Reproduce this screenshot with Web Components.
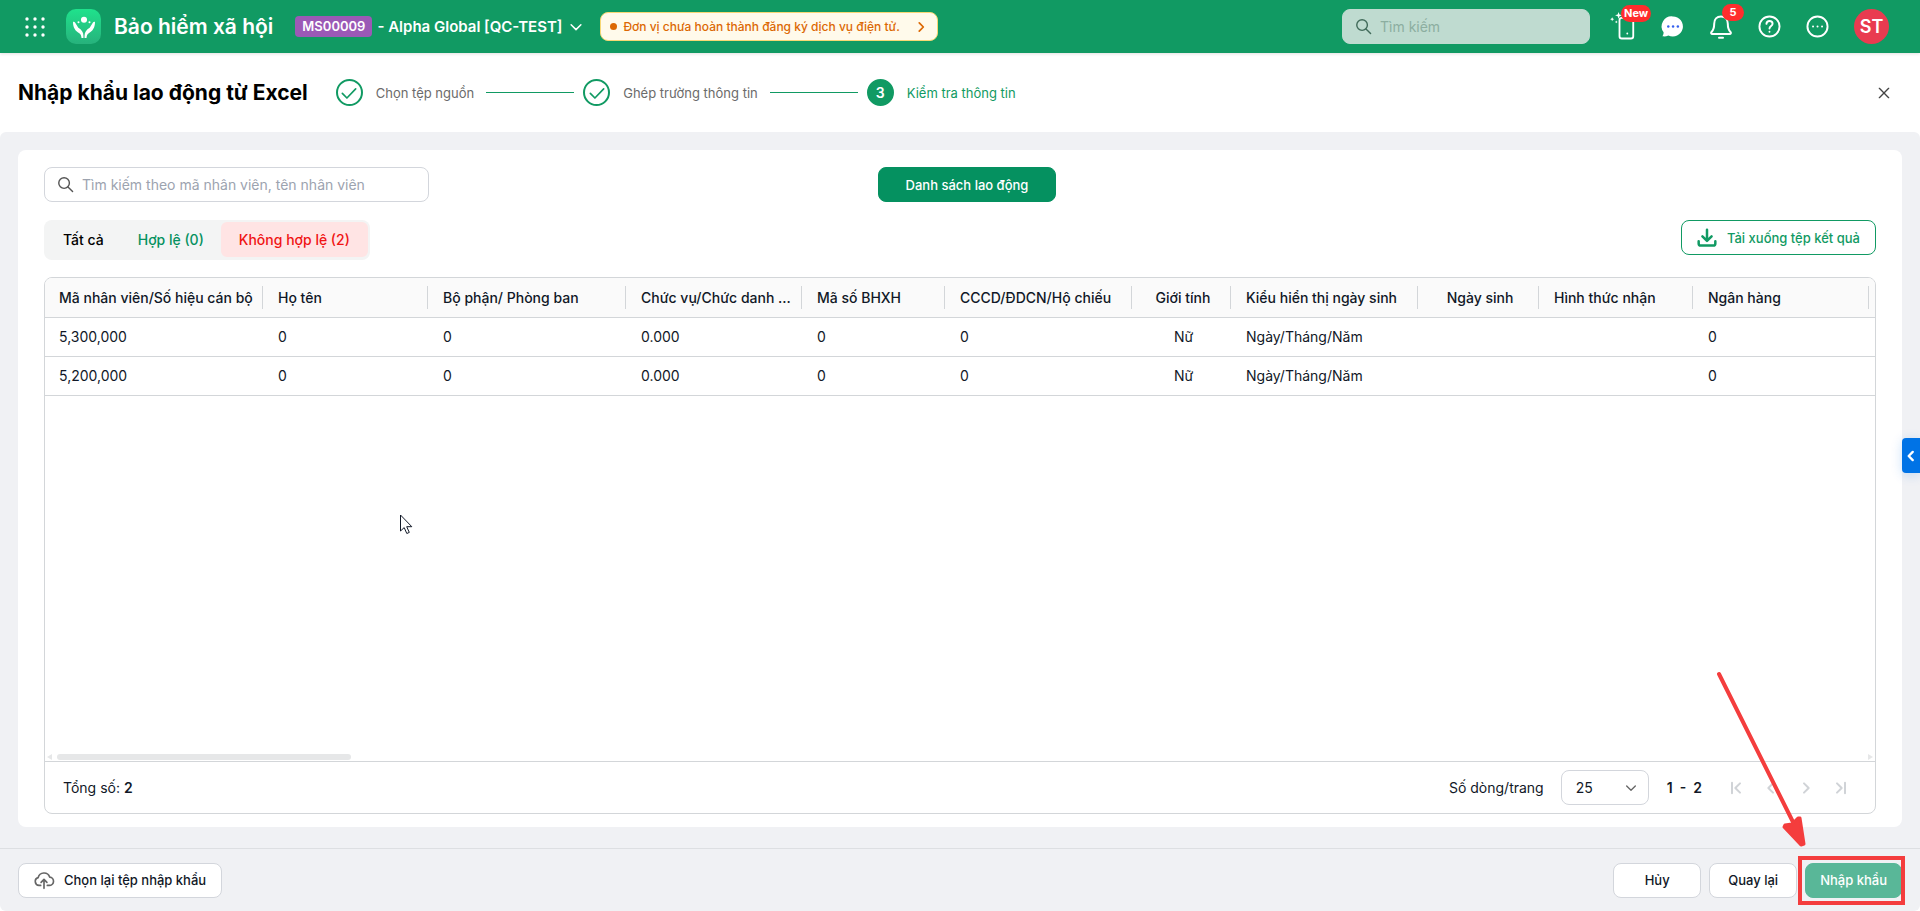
<!DOCTYPE html>
<html lang="vi">
<head>
<meta charset="utf-8">
<title>Nhập khẩu lao động từ Excel</title>
<style>
  body {
    margin: 0;
    background: #fff;
    color: #111827;
    font: 14px/20px Inter, "Open Sans", sans-serif;
  }
</style>
</head>
<body>
<import-page></import-page>

<script>
const ICONS = {
  apps: '<g fill="currentColor" stroke="none"><circle cx="4" cy="4" r="1.7"/><circle cx="12" cy="4" r="1.7"/><circle cx="20" cy="4" r="1.7"/><circle cx="4" cy="12" r="1.7"/><circle cx="12" cy="12" r="1.7"/><circle cx="20" cy="12" r="1.7"/><circle cx="4" cy="20" r="1.7"/><circle cx="12" cy="20" r="1.7"/><circle cx="20" cy="20" r="1.7"/></g>',
  search: '<circle cx="10" cy="10" r="7.500"/><path d="M15.500 15.500l6.500 6.500"/>',
  down: '<path d="M5.500 9l6.500 6.500L18.500 9"/>',
  right: '<path d="M9 5l7 7-7 7"/>',
  left: '<path d="M15 5l-7 7 7 7"/>',
  first: '<path d="M6 4v16M18 5l-7 7 7 7"/>',
  last: '<path d="M18 4v16M6 5l7 7-7 7"/>',
  close: '<path d="M5 5l14 14M19 5L5 19"/>',
  check: '<path d="M4 12.5l5.500 5.500L20 7"/>',
  phone: '<rect x="6" y="2" width="15" height="22.500" rx="2.500"/><path d="M14.500 19v.1"/><path fill="currentColor" stroke="none" d="M5 -4.500l1 2.800 2.800 1-2.800 1-1 2.800-1-2.800-2.800-1 2.800-1zM-2 1.300l.7 1.500 1.500.7-1.500.7L-2 5.700l-.7-1.500-1.500-.7 1.500-.7zM2.500 5l.5 1 1 .5-1 .5-.5 1-.5-1-1-.5 1-.5z"/>',
  chat: '<path fill="currentColor" stroke="none" d="M12.500 1.500a10.500 10.500 0 1 1-4.800 19.900c-2 1-4 1.300-6.200.9.900-1.300 1.300-2.600 1.200-4.200A10.500 10.500 0 0 1 12.500 1.500z"/><g fill="#3560ee" stroke="none"><circle cx="7.600" cy="12" r="1.300"/><circle cx="12.600" cy="12" r="1.300"/><circle cx="17.600" cy="12" r="1.300"/></g>',
  bell: '<path d="M12 1.500c-4.200 0-6.800 3-6.800 7.200 0 4.800-1 6.600-2.700 8.300-.8.900-.3 2 .8 2h17.400c1.100 0 1.600-1.100.8-2-1.700-1.700-2.700-3.500-2.700-8.300 0-4.200-2.600-7.200-6.800-7.200z"/><path d="M10 22.700h4"/>',
  help: '<circle cx="12" cy="12" r="10.500"/><path d="M8.800 9.300c.2-2 1.400-3 3.200-3s3.200 1.100 3.200 2.800c0 2.300-3.200 2.400-3.200 5"/><path d="M12 17.500v.1"/>',
  more: '<circle cx="12" cy="12" r="10.500"/><path d="M7.300 12h.1M12 12h.1M16.700 12h.1"/>',
  download: '<path d="M12 2v13M6.500 10l5.500 5.500 5.500-5.500M2 16v2.500c0 1.500 1 2.500 2.500 2.500h15c1.500 0 2.500-1 2.500-2.500V16"/>',
  upload: '<path d="M8 18.500H6a4.800 4.800 0 0 1-1-9.400A7.200 7.200 0 0 1 18.800 8.500 5 5 0 0 1 18 18.500h-2M12 22V11.500M8.500 14.800L12 11.300l3.500 3.500"/>',
  logo: '<g fill="#fff" stroke="none"><circle cx="12" cy="4" r="3.300"/><circle cx="6" cy="6.800" r="1.100"/><circle cx="18" cy="6.800" r="1.100"/><path d="M0 6.500c.9-.5 1.800 0 2.400.9l3.400 5.300c3.600 2 5.600 5 5.600 8.800v2.500H9.300c-.2-2.500-1-4.200-2.500-5.200C2.500 16.300 0 12.600 0 6.500zM24 6.500c-.9-.5-1.800 0-2.400.9l-3.400 5.300c-3.600 2-5.600 5-5.600 8.800v2.500h2.100c.2-2.500 1-4.200 2.500-5.200C21.500 16.300 24 12.600 24 6.500z"/></g>',
};

class UiIcon extends HTMLElement {
  constructor() {
    super();
    this.attachShadow({ mode: 'open' });
  }

  connectedCallback() {
    const size = this.getAttribute('size') || 20;
    const weight = this.getAttribute('weight') || 2;
    this.shadowRoot.innerHTML = `
      <style>
        :host { display: inline-flex; flex: none; }
        svg {
          display: block;
          overflow: visible;
          fill: none;
          stroke: currentColor;
          stroke-linecap: round;
          stroke-linejoin: round;
        }
      </style>
      <svg width="${size}" height="${size}" viewBox="0 0 24 24" stroke-width="${weight}" aria-hidden="true">${ICONS[this.getAttribute('name')]}</svg>
    `;
  }
}

class UiButton extends HTMLElement {
  constructor() {
    super();
    this.attachShadow({ mode: 'open' });
    this.shadowRoot.innerHTML = `
      <style>
        :host { display: inline-flex; }
        button {
          display: flex;
          align-items: center;
          justify-content: center;
          gap: 10px;
          box-sizing: border-box;
          min-width: 88px;
          height: 35px;
          padding: 0 15px;
          border: 1px solid #d3d6dc;
          border-radius: 8px;
          background: #fff;
          color: #111827;
          font: inherit;
          font-size: 13px;
          font-weight: 500;
          white-space: nowrap;
        }
        :host([kind="primary"]) button {
          padding: 0 27px;
          border-color: #059160;
          background: #059160;
          color: #fff;
        }
        :host([kind="outline"]) button {
          border-color: #119a63;
          color: #119a63;
        }
        :host([kind="muted"]) button {
          padding: 0 14px;
          border-color: #59b798;
          background: #59b798;
          color: #fff;
        }
      </style>
      <button type="button"><slot name="icon"></slot><slot></slot></button>
    `;
  }
}

class SearchBox extends HTMLElement {
  constructor() {
    super();
    this.attachShadow({ mode: 'open' });
  }

  connectedCallback() {
    const hint = this.getAttribute('hint');
    this.shadowRoot.innerHTML = `
      <style>
        :host { display: block; color: #555; --hint: #9ca3af; }
        label {
          display: flex;
          align-items: center;
          gap: 8px;
          box-sizing: border-box;
          height: 35px;
          padding: 0 12px;
          border: 1px solid #d3d6dc;
          border-radius: 8px;
          background: #fff;
        }
        input {
          flex: 1;
          min-width: 0;
          padding: 0;
          border: 0;
          outline: 0;
          background: none;
          color: inherit;
          font: inherit;
        }
        input::placeholder { color: var(--hint); opacity: 1; }
        :host([tinted]) { color: #416b5a; --hint: #8caea0; }
        :host([tinted]) label { border-color: #bfdbd0; background: #bfdbd0; }
      </style>
      <label><ui-icon name="search" size="17"></ui-icon><input type="text" placeholder="${hint}" aria-label="${hint}"></label>
    `;
  }
}

class AppHeader extends HTMLElement {
  constructor() {
    super();
    this.attachShadow({ mode: 'open' });
    this.shadowRoot.innerHTML = `
      <style>
        :host {
          display: flex;
          align-items: center;
          box-sizing: border-box;
          height: 53px;
          padding: 0 31px 0 23px;
          background: #119a63;
          box-shadow: 0 1px 3px rgba(0, 0, 0, .12);
          color: #fff;
          white-space: nowrap;
        }
        button {
          display: flex;
          align-items: center;
          padding: 0;
          border: 0;
          background: none;
          color: inherit;
          font: inherit;
        }
        .logo {
          display: grid;
          place-items: center;
          width: 35px;
          height: 35px;
          margin: 0 13px 0 19px;
          border-radius: 10px;
          background: linear-gradient(#1fe28c, #27b27c);
        }
        .product { font-size: 21px; line-height: 28px; font-weight: 600; }
        .company {
          gap: 5px;
          margin: 0 15px 0 22px;
          font-size: 15px;
          font-weight: 600;
        }
        .code {
          padding: 0 7px;
          border-radius: 4px;
          background: #9b59b6;
          line-height: 21px;
          font-size: 13px;
        }
        .notice {
          gap: 6px;
          box-sizing: border-box;
          height: 29px;
          padding: 0 9px;
          border: 1px solid #f7d774;
          border-radius: 8px;
          background: #fffaeb;
          color: #dc6803;
          font-size: 12px;
          font-weight: 500;
        }
        .dot { width: 7px; height: 7px; border-radius: 50%; background: currentColor; }
        .notice ui-icon { margin-left: 8px; }
        search-box { width: 248px; margin: 0 24px 0 auto; }
        .tools { display: flex; align-items: center; gap: 25px; }
        .tool { position: relative; }
        .badge {
          position: absolute;
          left: 13px;
          top: -11px;
          box-sizing: border-box;
          min-width: 22px;
          padding: 0 3px;
          border-radius: 9px;
          background: #ff2d2d;
          line-height: 17px;
          font-size: 11px;
          font-weight: 700;
          text-align: center;
        }
        .new { left: 7px; }
        .avatar {
          justify-content: center;
          width: 35px;
          height: 35px;
          border-radius: 50%;
          background: #e93b50;
          font-size: 18px;
          font-weight: 600;
        }
      </style>
      <button type="button" aria-label="Ứng dụng"><ui-icon name="apps" size="24"></ui-icon></button>
      <span class="logo"><ui-icon name="logo" size="22"></ui-icon></span>
      <span class="product">Bảo hiểm xã hội</span>
      <button type="button" class="company">
        <span class="code">MS00009</span>
        <span>- Alpha Global [QC-TEST]</span>
        <ui-icon name="down" size="18" weight="2"></ui-icon>
      </button>
      <button type="button" class="notice">
        <span class="dot"></span>
        <span>Đơn vị chưa hoàn thành đăng ký dịch vụ điện tử.</span>
        <ui-icon name="right" size="14" weight="3"></ui-icon>
      </button>
      <search-box tinted hint="Tìm kiếm"></search-box>
      <div class="tools">
        <button type="button" class="tool" aria-label="Ứng dụng di động"><ui-icon name="phone" size="22"></ui-icon><span class="badge new">New</span></button>
        <button type="button" class="tool" aria-label="Trò chuyện"><ui-icon name="chat" size="23"></ui-icon></button>
        <button type="button" class="tool" aria-label="Thông báo"><ui-icon name="bell" size="24"></ui-icon><span class="badge">5</span></button>
        <button type="button" class="tool" aria-label="Trợ giúp"><ui-icon name="help" size="23"></ui-icon></button>
        <button type="button" class="tool" aria-label="Thêm"><ui-icon name="more" size="23"></ui-icon></button>
        <button type="button" class="avatar">ST</button>
      </div>
    `;
  }
}

class WizardStep extends HTMLElement {
  constructor() {
    super();
    this.attachShadow({ mode: 'open' });
  }

  connectedCallback() {
    const mark = this.hasAttribute('done')
      ? '<ui-icon name="check" size="20" weight="2"></ui-icon>'
      : this.getAttribute('number');
    this.shadowRoot.innerHTML = `
      <style>
        :host {
          display: flex;
          align-items: center;
          color: #6b6b6b;
          font-size: 13px;
          white-space: nowrap;
        }
        .mark {
          display: grid;
          place-items: center;
          box-sizing: border-box;
          width: 27px;
          height: 27px;
          margin-right: 13px;
          border: 2px solid #119a63;
          border-radius: 50%;
          color: #119a63;
          font-size: 14px;
          font-weight: 600;
        }
        :host([active]) { color: #119a63; }
        :host([active]) .mark { background: #119a63; color: #fff; }
        .line {
          flex: none;
          width: 88px;
          margin: 0 9px 0 12px;
          border-top: 1px solid #119a63;
        }
        :host([active]) .line { display: none; }
      </style>
      <span class="mark">${mark}</span><slot></slot><span class="line"></span>
    `;
  }
}

class WizardHeader extends HTMLElement {
  constructor() {
    super();
    this.attachShadow({ mode: 'open' });
    this.shadowRoot.innerHTML = `
      <style>
        :host {
          display: flex;
          align-items: center;
          box-sizing: border-box;
          height: 79px;
          padding: 0 28px 0 18px;
        }
        h1 {
          margin: 0 28px 0 0;
          color: #000;
          font-size: 21px;
          line-height: 28px;
          font-weight: 700;
          white-space: nowrap;
        }
        button {
          display: flex;
          margin-left: auto;
          padding: 0;
          border: 0;
          background: none;
          color: #444;
        }
      </style>
      <h1>Nhập khẩu lao động từ Excel</h1>
      <wizard-step done>Chọn tệp nguồn</wizard-step>
      <wizard-step done>Ghép trường thông tin</wizard-step>
      <wizard-step active number="3">Kiểm tra thông tin</wizard-step>
      <button type="button" aria-label="Đóng"><ui-icon name="close" size="16"></ui-icon></button>
    `;
  }
}

class StatusTabs extends HTMLElement {
  constructor() {
    super();
    this.attachShadow({ mode: 'open' });
    this.shadowRoot.innerHTML = `
      <style>
        :host {
          display: inline-flex;
          box-sizing: border-box;
          height: 40px;
          padding: 2px 2px 3px;
          border-radius: 8px;
          background: #f3f4f4;
        }
        button {
          padding: 0 17px;
          border: 0;
          border-radius: 6px;
          background: none;
          color: #000;
          font: inherit;
          font-weight: 500;
          white-space: nowrap;
        }
        .valid { color: #059160; }
        .invalid { padding: 0 18px; background: #ffe4e4; color: #f01414; }
      </style>
      <button type="button">Tất cả</button>
      <button type="button" class="valid">Hợp lệ (0)</button>
      <button type="button" class="invalid">Không hợp lệ (2)</button>
    `;
  }
}

const COLUMNS = [
  { title: 'Mã nhân viên/Số hiệu cán bộ', width: 218 },
  { title: 'Họ tên', width: 165 },
  { title: 'Bộ phận/ Phòng ban', width: 198 },
  { title: 'Chức vụ/Chức danh ...', width: 176 },
  { title: 'Mã số BHXH', width: 143 },
  { title: 'CCCD/ĐDCN/Hộ chiếu', width: 187 },
  { title: 'Giới tính', width: 99, center: true },
  { title: 'Kiểu hiển thị ngày sinh', width: 187 },
  { title: 'Ngày sinh', width: 121, center: true },
  { title: 'Hình thức nhận', width: 154 },
  { title: 'Ngân hàng', width: 176 },
];

const ROWS = [
  ['5,300,000', '0', '0', '0.000', '0', '0', 'Nữ', 'Ngày/Tháng/Năm', '', '', '0'],
  ['5,200,000', '0', '0', '0.000', '0', '0', 'Nữ', 'Ngày/Tháng/Năm', '', '', '0'],
];

class EmployeeGrid extends HTMLElement {
  constructor() {
    super();
    this.attachShadow({ mode: 'open' });
    this.render();
  }

  render() {
    const cls = i => COLUMNS[i].center ? ' class="center"' : '';
    this.shadowRoot.innerHTML = `
      <style>
        :host {
          display: flex;
          flex-direction: column;
          border: 1px solid #d3d6d9;
          border-radius: 8px;
          overflow: hidden;
        }
        .body { flex: 1; overflow: hidden; }
        table { width: 100%; border-collapse: separate; border-spacing: 0; table-layout: fixed; }
        th, td {
          box-sizing: border-box;
          height: 39px;
          padding: 0 0 0 15px;
          border-bottom: 1px solid #d3d6d9;
          text-align: left;
          white-space: nowrap;
        }
        th { height: 40px; background: #fafafa; font-weight: 500; }
        th:first-child, td:first-child { padding-left: 14px; }
        th span { display: block; border-right: 1px solid #d3d6d9; line-height: 23px; }
        .blank { padding: 0; }
        .center { text-align: center; }
        th.center span, td.center { padding-right: 11px; }
        .scroll {
          display: flex;
          align-items: center;
          gap: 5px;
          height: 9px;
          padding: 0 2px;
          color: #e6e7e8;
        }
        .thumb { width: 294px; height: 6px; border-radius: 3px; background: #e6e7e8; }
        .arrow { border: 3px solid transparent; }
        .prev { border-left: 0; border-right: 5px solid currentColor; }
        .next { border-right: 0; border-left: 5px solid currentColor; margin-left: auto; }
        .pager {
          display: flex;
          align-items: center;
          box-sizing: border-box;
          height: 52px;
          padding: 0 24px 0 18px;
          border-top: 1px solid #d3d6d9;
        }
        b { font-weight: 600; }
        label { margin: 0 17px 0 auto; }
        .size {
          display: grid;
          align-items: center;
          justify-items: end;
          box-sizing: border-box;
          width: 88px;
          height: 35px;
          border: 1px solid #d3d6dc;
          border-radius: 8px;
          color: #666;
        }
        .size > * { grid-area: 1 / 1; }
        .size ui-icon { margin-right: 9px; pointer-events: none; }
        select {
          width: 100%;
          height: 33px;
          padding: 0 14px;
          appearance: none;
          border: 0;
          background: none;
          color: #111827;
          font: inherit;
        }
        .range { margin: 0 24px 0 18px; white-space: pre; }
        nav { display: flex; gap: 15px; }
        nav button {
          display: flex;
          padding: 0 2px;
          border: 0;
          background: none;
          color: #d0d3d7;
        }
      </style>
      <div class="body">
        <table>
          <colgroup>${COLUMNS.map(c => `<col style="width: ${c.width}px">`).join('')}<col></colgroup>
          <thead>
            <tr>${COLUMNS.map((c, i) => `<th${cls(i)}><span>${c.title}</span></th>`).join('')}<th class="blank"></th></tr>
          </thead>
          <tbody>
            ${ROWS.map(row => `<tr>${row.map((v, i) => `<td${cls(i)}>${v}</td>`).join('')}<td class="blank"></td></tr>`).join('')}
          </tbody>
        </table>
      </div>
      <div class="scroll"><i class="arrow prev"></i><span class="thumb"></span><i class="arrow next"></i></div>
      <div class="pager">
        <span>Tổng số: <b>2</b></span>
        <label for="size">Số dòng/trang</label>
        <span class="size">
          <select id="size"><option>25</option><option>50</option><option>100</option></select>
          <ui-icon name="down" size="16"></ui-icon>
        </span>
        <b class="range">1  -  2</b>
        <nav>
          <button type="button" aria-label="Trang đầu"><ui-icon name="first" size="16" weight="3"></ui-icon></button>
          <button type="button" aria-label="Trang trước"><ui-icon name="left" size="16" weight="3"></ui-icon></button>
          <button type="button" aria-label="Trang sau"><ui-icon name="right" size="16" weight="3"></ui-icon></button>
          <button type="button" aria-label="Trang cuối"><ui-icon name="last" size="16" weight="3"></ui-icon></button>
        </nav>
      </div>
    `;
  }
}

class ActionBar extends HTMLElement {
  constructor() {
    super();
    this.attachShadow({ mode: 'open' });
    this.shadowRoot.innerHTML = `
      <style>
        :host {
          display: flex;
          align-items: center;
          gap: 8px;
          box-sizing: border-box;
          height: 63px;
          padding: 0 18px;
          border-top: 1px solid #dddfe2;
        }
        .restart { margin-right: auto; }
        .restart ui-icon { color: #666; }
        .target { position: relative; display: flex; }
        /* red frame and arrow drawn over the import button */
        .frame {
          position: absolute;
          inset: -7px -3px -7px -7px;
          border: 4px solid #f43d3d;
          pointer-events: none;
        }
        .pointer {
          position: absolute;
          right: 90px;
          bottom: 51px;
          pointer-events: none;
        }
      </style>
      <ui-button class="restart"><ui-icon slot="icon" name="upload" size="20" weight="2"></ui-icon>Chọn lại tệp nhập khẩu</ui-button>
      <ui-button>Hủy</ui-button>
      <ui-button>Quay lại</ui-button>
      <span class="target">
        <ui-button kind="muted">Nhập khẩu</ui-button>
        <span class="frame"></span>
        <svg class="pointer" width="98" height="178" viewBox="0 0 98 178" aria-hidden="true">
          <path d="M5 5L81 157" stroke="#f43d3d" stroke-width="4" stroke-linecap="round"/>
          <path d="M71 156L78 155 84 149 86 149 90 175 87 176 70 158z" fill="#f43d3d" stroke="#f43d3d" stroke-width="3" stroke-linejoin="round"/>
        </svg>
      </span>
    `;
  }
}

class ImportPage extends HTMLElement {
  constructor() {
    super();
    this.attachShadow({ mode: 'open' });
    this.shadowRoot.innerHTML = `
      <style>
        :host { display: flex; flex-direction: column; min-height: 100vh; }
        main {
          flex: 1;
          display: flex;
          flex-direction: column;
          border-radius: 6px;
          background: #f0f1f4;
        }
        .panel {
          flex: 1;
          display: flex;
          flex-direction: column;
          margin: 18px 18px 21px;
          padding: 17px 26px 13px;
          border-radius: 8px;
          background: #fff;
        }
        .top {
          display: grid;
          grid-template-columns: 1fr auto 1fr;
          padding-left: 14px;
        }
        .top search-box { width: 385px; margin-left: -14px; }
        .filters {
          display: flex;
          justify-content: space-between;
          align-items: flex-start;
          margin: 18px 0 17px;
        }
        employee-grid { flex: 1; }
        .side {
          position: fixed;
          right: 0;
          top: 438px;
          display: grid;
          place-items: center;
          width: 18px;
          height: 35px;
          padding: 0;
          border: 0;
          border-radius: 4px 0 0 4px;
          background: #0073e6;
          box-shadow: 0 2px 12px rgba(0, 115, 230, .2);
          color: #fff;
        }
        .cursor { position: fixed; left: 399px; top: 514px; }
      </style>
      <app-header></app-header>
      <wizard-header></wizard-header>
      <main>
        <section class="panel">
          <div class="top">
            <search-box hint="Tìm kiếm theo mã nhân viên, tên nhân viên"></search-box>
            <ui-button kind="primary">Danh sách lao động</ui-button>
          </div>
          <div class="filters">
            <status-tabs></status-tabs>
            <ui-button kind="outline"><ui-icon slot="icon" name="download" size="20" weight="3"></ui-icon>Tải xuống tệp kết quả</ui-button>
          </div>
          <employee-grid></employee-grid>
        </section>
        <action-bar></action-bar>
      </main>
      <button type="button" class="side" aria-label="Mở rộng"><ui-icon name="left" size="14" weight="4"></ui-icon></button>
      <svg class="cursor" width="14" height="22" viewBox="0 0 14 22" aria-hidden="true">
        <path d="M1.500 1v16l3.700-3.400 2.600 5.900 2.500-1.100-2.600-5.700h5.100z" fill="#fff" stroke="#111827"/>
      </svg>
    `;
  }
}

customElements.define('ui-icon', UiIcon);
customElements.define('ui-button', UiButton);
customElements.define('search-box', SearchBox);
customElements.define('app-header', AppHeader);
customElements.define('wizard-step', WizardStep);
customElements.define('wizard-header', WizardHeader);
customElements.define('status-tabs', StatusTabs);
customElements.define('employee-grid', EmployeeGrid);
customElements.define('action-bar', ActionBar);
customElements.define('import-page', ImportPage);
</script>
</body>
</html>
